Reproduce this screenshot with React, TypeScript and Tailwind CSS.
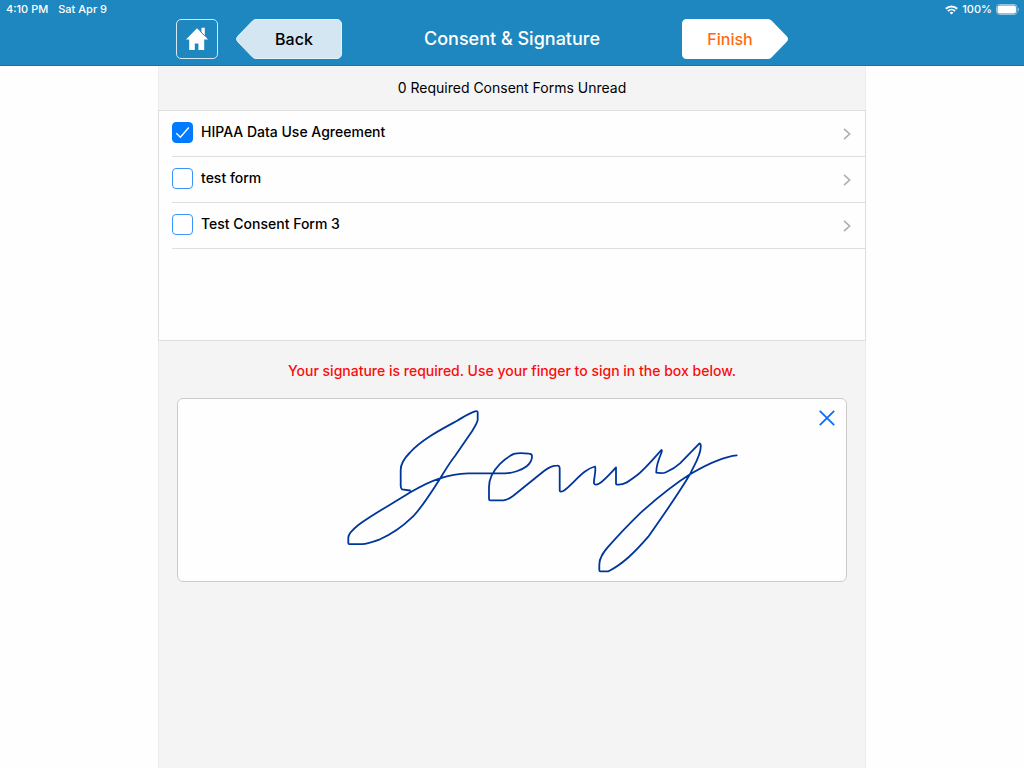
import { useState } from "react";

const initialForms = [
  { id: "hipaa", title: "HIPAA Data Use Agreement", signed: true },
  { id: "test-form", title: "test form", signed: false },
  { id: "consent-3", title: "Test Consent Form 3", signed: false },
];

function StatusBar() {
  return (
    <div className="flex h-[19px] items-center justify-between pl-[6px] pr-1 text-[11px] font-medium text-white">
      <div className="flex gap-[10px]">
        <span>4:10 PM</span>
        <span>Sat Apr 9</span>
      </div>
      <div className="flex items-center gap-1">
        <svg className="h-[10px] w-[13px]" viewBox="0 0 13 10" fill="none" stroke="currentColor" strokeWidth="1.9" aria-hidden="true">
          <path d="M0.8 3.8a8.2 8.2 0 0 1 11.4 0" />
          <path d="M2.9 6.1a5.2 5.2 0 0 1 7.2 0" />
          <path d="M6.5 9.6 4.6 7.7a2.7 2.7 0 0 1 3.8 0z" fill="currentColor" stroke="none" />
        </svg>
        <span>100%</span>
        <svg className="h-[11px] w-6" viewBox="0 0 24 11" fill="none" aria-hidden="true">
          <rect x="0.5" y="0.5" width="20.5" height="10" rx="3" stroke="#8fc3e0" />
          <rect x="1.500" y="1.500" width="18.500" height="8" rx="2" fill="white" />
          <path d="M22.2 3.8v3.4c1.3-.5 1.3-2.9 0-3.4z" fill="#9bc8e2" />
        </svg>
      </div>
    </div>
  );
}

function Header() {
  return (
    <header className="border-b border-[#1673ab] bg-[#1f87bf] pb-[6px]">
      <StatusBar />
      <div className="mx-auto grid w-full max-w-[708px] grid-cols-[1fr_auto_1fr] items-center px-[18px]">
        <div className="flex gap-[18px]">
          <button
            type="button"
            aria-label="Home"
            className="flex h-10 w-[42px] items-center justify-center rounded-[5px] border border-[#d5e8f3] text-white"
          >
            <svg className="h-6 w-6" viewBox="0 0 24 24" fill="currentColor" aria-hidden="true">
              <path d="M12 1.2 1 12.4h3.2V23h5.6v-6.4h3.6V23h5.8V12.4H23l-3.2-3.3V.8h-3.4v4.8z" />
              <path d="M15.6 .6v4l4.2 4.3" fill="none" stroke="#1f87bf" strokeWidth="1" />
            </svg>
          </button>
          <button type="button" className="relative flex h-10 w-[106px] items-center justify-center pl-[10px] text-base font-medium text-black">
            <svg className="absolute inset-0 h-full w-full" viewBox="0 0 106 40" aria-hidden="true">
              <path
                d="M20 .5H101a4.5 4.5 0 0 1 4.5 4.5v30a4.5 4.5 0 0 1-4.5 4.5H20q-2 0-3.5-1.5L1.5 22.5q-2-2.5 0-5L16.5 2Q18 .5 20 .5z"
                fill="#d3e6f2"
                stroke="#e6f1f8"
              />
            </svg>
            <span className="relative">Back</span>
          </button>
        </div>
        <h1 className="text-lg font-medium text-white">Consent &amp; Signature</h1>
        <div className="flex justify-end pr-[60px]">
          <button type="button" className="relative flex h-10 w-[106px] items-center justify-center pr-[10px] text-base font-medium text-[#ff6a13]">
            <svg className="absolute inset-0 h-full w-full" viewBox="0 0 106 40" aria-hidden="true">
              <path
                d="M86 0H4.5A4.5 4.5 0 0 0 0 4.5v31A4.5 4.5 0 0 0 4.5 40H86q2 0 3.5-1.5L105 22.5q2-2.5 0-5L89.5 1.5Q88 0 86 0z"
                fill="white"
              />
            </svg>
            <span className="relative">Finish</span>
          </button>
        </div>
      </div>
    </header>
  );
}

function ConsentList() {
  const [forms, setForms] = useState(initialForms);
  const toggle = (id: string) =>
    setForms(forms.map((form) => (form.id === id ? { ...form, signed: !form.signed } : form)));

  return (
    <ul className="min-h-[231px] border border-[#dedede] bg-[#fefefe] pl-[13px]">
      {forms.map((form) => (
        <li key={form.id} className="flex h-[46px] items-center border-b border-[#dedede] pr-[14px]">
          <label className="flex flex-1 items-center gap-2 pb-[3px] text-sm font-medium text-black">
            <span className="grid h-[21px] w-[21px] place-items-center">
              <input
                type="checkbox"
                checked={form.signed}
                onChange={() => toggle(form.id)}
                className="col-start-1 row-start-1 h-[21px] w-[21px] appearance-none rounded-[4px] border border-[#3b94fb] bg-white checked:border-[#007aff] checked:bg-[#007aff]"
              />
              {form.signed && (
                <svg className="pointer-events-none col-start-1 row-start-1 h-[21px] w-[21px]" viewBox="0 0 21 21" fill="none" stroke="white" strokeWidth="1.4" aria-hidden="true">
                  <path d="M4.3 11.2 8.4 15.3 16.8 5.5" />
                </svg>
              )}
            </span>
            {form.title}
          </label>
          <button type="button" aria-label={`Open ${form.title}`} className="text-[#b0b0b0]">
            <svg className="h-3 w-2" viewBox="0 0 8 12" fill="none" stroke="currentColor" strokeWidth="1.7" aria-hidden="true">
              <path d="M1 .8 6.6 6 1 11.2" />
            </svg>
          </button>
        </li>
      ))}
    </ul>
  );
}

function SignatureBox() {
  const [signed, setSigned] = useState(true);
  return (
    <div className="relative mx-[19px] h-[184px] rounded-md border border-[#cbcbcb] bg-[#fefefe]">
      {signed && (
        <svg className="h-full w-full" viewBox="0 0 668 182" fill="none" stroke="#00369b" strokeWidth="1.8" strokeLinecap="round" strokeLinejoin="round" role="img" aria-label="Signature">
          <path d="M232 91.5 224 90.3Q222.7 89 222.7 87V71C222.7 65 227 58.5 232 53.5C237 48 244 42.5 252 37.3C260 32 271 26.2 278.7 22C285 18.3 291 14 297 12.3Q299.7 11.7 299.7 13.5V20.5C299.7 23.5 296 29 293.7 32.7L277 57C272 63 268 70 262 79.7C252 95.5 240 113 233.7 118.7C224 128 213 135.5 202 140.3C196 142.5 189 145 184 145.2H171.5Q170.3 145.2 170.3 144V138.5C170.3 134.5 176 129.5 180.3 126C195 115 214 105 232 93.6C242 87.5 252 82.5 262 79.3C271 76.3 280 74.7 290.3 74.4H327C334 74.4 344 71 348.7 67.3C352 64.5 354.2 61 354 57Q354 55 351 54.7C346 54 339 54 336 54.9C331 57 326 61 322 64.8C316 71 311 80 311 87.7V100Q311 101.4 312.5 101.4H325.5C329 101.2 333 98.5 335.3 96.8L366 72C371 68.3 376 66.7 379 66.7Q381.7 66.2 381.7 70V91.5Q381.7 93.3 385.3 92C391 88.5 400 77.5 407 72.5C411 69.5 415 68 417 67.5C418.5 71 415.5 80 416 84.5Q417 86.8 421.3 84.5C427 81 434 72.5 438 68.5V84.5Q438 85.7 440 85.7C446 86 450 83 458.7 76.5C467 70 477 58 483.3 51Q484.5 51 483.3 54C481 59.5 478 67 478.3 73.7C482 74.3 486 74.2 488 73.2C493 71 498 68 502 64.3L521.5 44.3Q523 44.8 522.7 47C523.5 55 516 66.5 512 75.3C501 94 487 114 470.3 137.7C464 145 457 152.5 450.3 158.5C444 164 437 169 430.5 172.3H422.5Q421.3 172.3 421.3 171V166C421.3 158 426 152.5 430.3 147.7C440 136.5 451 125 462 114.3C478 100 496 85.5 512 75.3C520 70.5 530 65 538.7 61.8C546 59 552 57 558.7 56.4" />
        </svg>
      )}
      <button
        type="button"
        aria-label="Clear signature"
        onClick={() => setSigned(false)}
        className="absolute right-[11px] top-[11px] text-[#0a6dfa]"
      >
        <svg className="h-4 w-4" viewBox="0 0 16 16" fill="none" stroke="currentColor" strokeWidth="1.8" aria-hidden="true">
          <path d="M.8.8 15.2 15.2M15.2.8.8 15.2" />
        </svg>
      </button>
    </div>
  );
}

export default function App() {
  return (
    <div className="flex min-h-screen flex-col bg-[#fefefe] font-['Inter','Liberation_Sans',sans-serif]">
      <Header />
      <main className="mx-auto w-full max-w-[708px] flex-1 border-x border-[#ededed] bg-[#f4f4f4] pb-8">
        <p className="flex h-11 items-center justify-center text-sm text-black">
          0 Required Consent Forms Unread
        </p>
        <div className="-mx-px">
          <ConsentList />
          <p className="flex h-[57px] items-center justify-center pt-[3px] text-sm font-medium text-[#fb0d0d]">
            Your signature is required. Use your finger to sign in the box below.
          </p>
          <SignatureBox />
        </div>
      </main>
    </div>
  );
}
